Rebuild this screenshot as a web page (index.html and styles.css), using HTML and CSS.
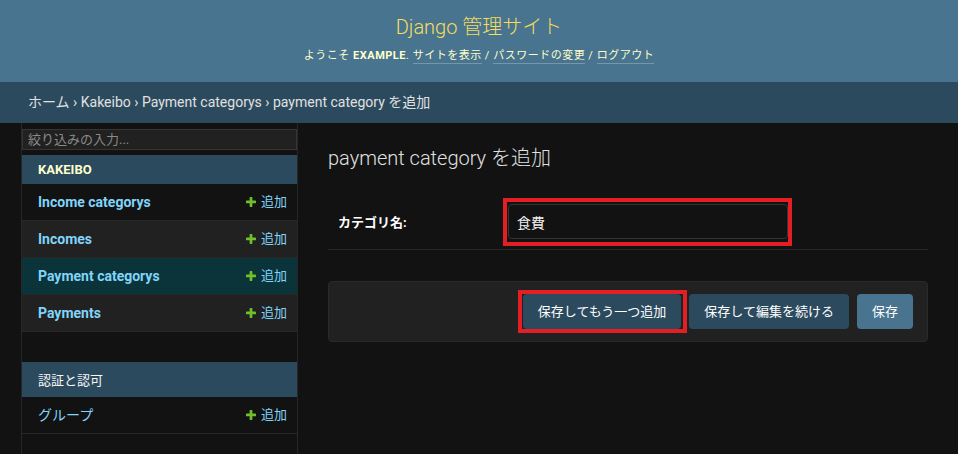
FILE: index.html
```html
<!DOCTYPE html>
<html lang="ja">
<head>
<meta charset="utf-8">
<title>payment category を追加 | Django サイト管理</title>
<link rel="stylesheet" href="styles.css">
</head>
<body>
<div class="page">
  <header class="header">
    <h1 class="site-name"><a href="#">Django 管理サイト</a></h1>
    <div class="user-tools">ようこそ <strong>EXAMPLE</strong>. <a href="#">サイトを表示</a> / <a href="#">パスワードの変更</a> / <a href="#">ログアウト</a></div>
  </header>
  <nav class="breadcrumbs"><a href="#">ホーム</a> › <a href="#">Kakeibo</a> › <a href="#">Payment categorys</a> › payment category を追加</nav>
  <div class="main">
    <div class="toggle-nav"></div>
    <nav class="sidebar">
      <input class="nav-filter" type="search" placeholder="絞り込みの入力...">
      <div class="module">
        <div class="caption caption-current">KAKEIBO</div>
        <div class="nav-row"><a class="model-link" href="#">Income categorys</a><a class="addlink" href="#"><svg class="plus" viewBox="192 192 1408 1408"><path d="M1600 796v192q0 40-28 68t-68 28h-416v416q0 40-28 68t-68 28h-192q-40 0-68-28t-28-68v-416h-416q-40 0-68-28t-28-68v-192q0-40 28-68t68-28h416v-416q0-40 28-68t68-28h192q40 0 68 28t28 68v416h416q40 0 68 28t28 68z"/></svg>追加</a></div>
        <div class="nav-row nav-row-dark"><a class="model-link" href="#">Incomes</a><a class="addlink" href="#"><svg class="plus" viewBox="192 192 1408 1408"><path d="M1600 796v192q0 40-28 68t-68 28h-416v416q0 40-28 68t-68 28h-192q-40 0-68-28t-28-68v-416h-416q-40 0-68-28t-28-68v-192q0-40 28-68t68-28h416v-416q0-40 28-68t68-28h192q40 0 68 28t28 68v416h416q40 0 68 28t28 68z"/></svg>追加</a></div>
        <div class="nav-row nav-row-current"><a class="model-link" href="#">Payment categorys</a><a class="addlink" href="#"><svg class="plus" viewBox="192 192 1408 1408"><path d="M1600 796v192q0 40-28 68t-68 28h-416v416q0 40-28 68t-68 28h-192q-40 0-68-28t-28-68v-416h-416q-40 0-68-28t-28-68v-192q0-40 28-68t68-28h416v-416q0-40 28-68t68-28h192q40 0 68 28t28 68v416h416q40 0 68 28t28 68z"/></svg>追加</a></div>
        <div class="nav-row nav-row-dark"><a class="model-link" href="#">Payments</a><a class="addlink" href="#"><svg class="plus" viewBox="192 192 1408 1408"><path d="M1600 796v192q0 40-28 68t-68 28h-416v416q0 40-28 68t-68 28h-192q-40 0-68-28t-28-68v-416h-416q-40 0-68-28t-28-68v-192q0-40 28-68t68-28h416v-416q0-40 28-68t68-28h192q40 0 68 28t28 68v416h416q40 0 68 28t28 68z"/></svg>追加</a></div>
      </div>
      <div class="module">
        <div class="caption">認証と認可</div>
        <div class="nav-row"><a class="model-link model-link-cjk" href="#">グループ</a><a class="addlink" href="#"><svg class="plus" viewBox="192 192 1408 1408"><path d="M1600 796v192q0 40-28 68t-68 28h-416v416q0 40-28 68t-68 28h-192q-40 0-68-28t-28-68v-416h-416q-40 0-68-28t-28-68v-192q0-40 28-68t68-28h416v-416q0-40 28-68t68-28h192q40 0 68 28t28 68v416h416q40 0 68 28t28 68z"/></svg>追加</a></div>
      </div>
    </nav>
    <div class="content">
      <h1 class="title">payment category を追加</h1>
      <div class="fieldset">
        <div class="form-row">
          <label class="field-label" for="id_name">カテゴリ名:</label>
          <span class="annot annot-input"><input class="text-input" id="id_name" type="text" value="食費"></span>
        </div>
      </div>
      <div class="submit-row">
        <span class="annot annot-button"><button class="btn" type="button">保存してもう一つ追加</button></span>
        <button class="btn" type="button">保存して編集を続ける</button>
        <button class="btn btn-default" type="button">保存</button>
      </div>
    </div>
  </div>
</div>
</body>
</html>
```

FILE: styles.css
```css
* { box-sizing: border-box; }

html, body {
  margin: 0;
  padding: 0;
  height: 100%;
}

body {
  background: #121212;
  color: #eeeeee;
  font-family: Roboto, "Noto Sans CJK JP", sans-serif;
  font-size: 13px;
}

a { text-decoration: none; }

.page {
  min-height: 100vh;
  display: flex;
  flex-direction: column;
}

/* Header */
.header {
  height: 82px;
  background: #48748f;
  display: flex;
  flex-direction: column;
  align-items: center;
  padding: 15px 30px 0;
}

.site-name {
  margin: 0;
  font-size: 20px;
  line-height: 24px;
  font-weight: 300;
}

.site-name a { color: #f5dd5d; }

.user-tools {
  margin-top: 9px;
  font-size: 11px;
  line-height: 16px;
  letter-spacing: 0.5px;
  color: #ffffcc;
}

.user-tools strong { font-weight: 700; }

.user-tools a {
  color: #ffffcc;
  padding-bottom: 1px;
  border-bottom: 1px solid rgba(255, 255, 255, 0.25);
}

/* Breadcrumbs */
.breadcrumbs {
  background: #2c4a5e;
  color: #e0e0e0;
  padding: 10px 28px;
  font-size: 14px;
  line-height: 21px;
}

.breadcrumbs a { color: #e0e0e0; }

/* Main */
.main {
  flex: 1;
  display: flex;
}

.toggle-nav {
  flex: 0 0 22px;
  border-right: 1px solid #272727;
  background: #121212;
}

.sidebar {
  flex: 0 0 276px;
  border-right: 1px solid #272727;
  border-top: 1px solid transparent;
  background: #121212;
}

.nav-filter {
  display: block;
  width: 100%;
  margin: 5px 0;
  padding: 2px 5px;
  height: 21px;
  border: 1px solid #353535;
  background: #212121;
  color: #eeeeee;
  font-family: Roboto, "Noto Sans CJK JP", sans-serif;
  font-size: 13px;
  outline: none;
}

.nav-filter::placeholder { color: #8a8a8a; }

.module { margin-bottom: 30px; }

.caption {
  background: #2c4a5e;
  color: #f7f7f7;
  padding: 8px 16px;
  font-size: 13px;
  line-height: normal;
}

.caption-current {
  color: #ffffcc;
  font-weight: 700;
  padding: 7px 16px;
}

.nav-row {
  display: flex;
  align-items: center;
  justify-content: space-between;
  padding: 10px 10px 10px 16px;
  border-bottom: 1px solid #272727;
  line-height: 16px;
}

.nav-row-dark { background: #212121; }
.nav-row-current { background: #0a3439; }

.model-link {
  color: #81d4fa;
  font-weight: 700;
  font-size: 14px;
}

.model-link-cjk {
  font-weight: 400;
  font-size: 14px;
}

.addlink {
  display: flex;
  align-items: center;
  gap: 5px;
  color: #81d4fa;
  font-size: 13px;
}

.plus {
  width: 10px;
  height: 10px;
  fill: #70bf2b;
}

/* Content */
.content {
  flex: 1;
  padding: 24px 30px;
}

.title {
  margin: 0 0 24px;
  font-size: 20px;
  line-height: 23px;
  font-weight: 300;
  color: #e0e0e0;
}

.fieldset { margin: 0 0 31px; }

.form-row {
  display: flex;
  align-items: center;
  padding: 10px;
  border-bottom: 1px solid #272727;
}

.field-label {
  width: 170px;
  padding-right: 10px;
  font-weight: 700;
  font-size: 13px;
  color: #ffffff;
}

.text-input {
  display: block;
  width: 280px;
  height: 35px;
  padding: 8px;
  border: 1px solid #353535;
  border-radius: 4px;
  background: #121212;
  color: #eeeeee;
  font-family: Roboto, "Noto Sans CJK JP", sans-serif;
  font-size: 14px;
  outline: none;
}

/* Red annotation boxes */
.annot {
  position: relative;
  display: inline-block;
}

.annot::after {
  content: "";
  position: absolute;
  border: 4px solid #e31e25;
  pointer-events: none;
}

.annot-input::after {
  top: -6px;
  bottom: -7px;
  left: -5px;
  right: -4px;
}

.annot-button::after {
  top: -4px;
  bottom: -4px;
  left: -5px;
  right: -6px;
}

.submit-row {
  display: flex;
  justify-content: flex-end;
  align-items: center;
  gap: 8px;
  padding: 12px 14px;
  background: #212121;
  border: 1px solid #2a2a2a;
  border-radius: 4px;
}

.btn {
  display: block;
  height: 35px;
  padding: 10px 15px;
  border: 0;
  border-radius: 4px;
  background: #2c4a5e;
  color: #ffffff;
  font-family: Roboto, "Noto Sans CJK JP", sans-serif;
  font-size: 13px;
  line-height: 15px;
  cursor: pointer;
}

.btn-default { background: #48748f; }
```
